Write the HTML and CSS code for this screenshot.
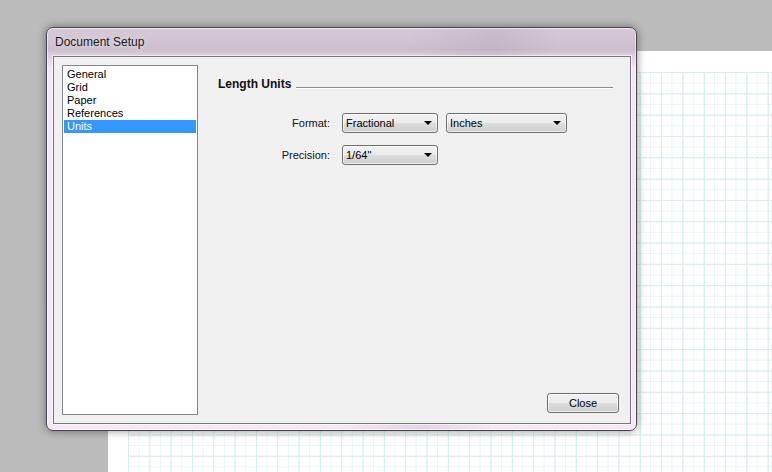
FILE: index.html
```html
<!DOCTYPE html>
<html>
<head>
<meta charset="utf-8">
<link rel="stylesheet" href="styles.css">
</head>
<body>
<div class="desktop">
  <div class="paper"><div class="grid"></div></div>
  <div class="window">
    <div class="titlebar">Document Setup</div>
    <div class="client">
      <ul class="list">
        <li>General</li>
        <li>Grid</li>
        <li>Paper</li>
        <li>References</li>
        <li class="selected">Units</li>
      </ul>
      <div class="panel">
        <div class="group-head"><span class="group-title">Length Units</span><span class="rule"></span></div>
        <div class="form">
          <label class="lbl">Format:</label>
          <div class="fields">
            <div class="combo w96"><span>Fractional</span><i class="arrow"></i></div>
            <div class="combo w121"><span>Inches</span><i class="arrow"></i></div>
          </div>
          <label class="lbl">Precision:</label>
          <div class="fields">
            <div class="combo w96"><span>1/64"</span><i class="arrow"></i></div>
          </div>
        </div>
        <div class="footer"><button class="btn">Close</button></div>
      </div>
    </div>
  </div>
</div>
</body>
</html>
```

FILE: styles.css
```css
html, body {
  margin: 0;
  padding: 0;
}
body {
  width: 772px;
  height: 472px;
  overflow: hidden;
  background: #bbbbbb;
  font-family: "Liberation Sans", Arial, sans-serif;
  font-size: 11px;
  color: #000;
}
.desktop {
  position: relative;
  width: 772px;
  height: 472px;
}
.paper {
  position: absolute;
  left: 108px;
  top: 51px;
  right: 0;
  bottom: 0;
  background: #ffffff;
  padding: 21px 0 0 20px;
  box-sizing: border-box;
}
.grid {
  width: 100%;
  height: 100%;
  background-color: #fff;
  background-image:
    linear-gradient(to right, #d9eced 1px, transparent 1px),
    linear-gradient(to bottom, #d9eced 1px, transparent 1px),
    linear-gradient(to right, #e9f5f5 1px, transparent 1px),
    linear-gradient(to bottom, #e9f5f5 1px, transparent 1px);
  background-size: 21.33px 21.33px, 21.33px 21.33px, 10.667px 10.667px, 10.667px 10.667px;
}
.window {
  position: absolute;
  left: 46px;
  top: 27px;
  width: 591px;
  height: 404px;
  box-sizing: border-box;
  border: 1px solid #4a4550;
  border-radius: 7px;
  padding: 0 5px 6px 6px;
  background:
    linear-gradient(100deg, rgba(255,255,255,0) 55%, rgba(150,130,155,0.18) 68%, rgba(255,255,255,0) 78%),
    linear-gradient(to bottom, #d6c9d8 0px, #cdbfce 22px, #dccfdd 27px, #f3e7f3 40px, #f4e8f4 100%);
  box-shadow: 0 0 9px rgba(0,0,0,0.45), inset 0 0 0 1px rgba(255,255,255,0.55);
  display: flex;
  flex-direction: column;
}
.titlebar {
  height: 28px;
  line-height: 28px;
  padding-left: 2px;
  font-size: 12px;
  color: #1a1a1a;
  text-shadow: 0 0 6px rgba(255,255,255,0.8);
}
.client {
  flex: 1;
  border: 1px solid #7a747c;
  background: #f0f0f0;
  display: flex;
  padding: 8px 0 8px 8px;
  box-shadow: 0 0 0 1px rgba(255,255,255,0.6);
}
.list {
  list-style: none;
  margin: 0;
  padding: 2px 1px;
  width: 136px;
  box-sizing: border-box;
  border: 1px solid #828790;
  background: #ffffff;
}
.list li {
  height: 13px;
  line-height: 13px;
  padding-left: 3px;
}
.list li.selected {
  background: #3399ff;
  color: #ffffff;
}
.panel {
  flex: 1;
  display: flex;
  flex-direction: column;
  padding: 12px 11px 2px 20px;
}
.group-head {
  display: flex;
  height: 14px;
  align-items: flex-end;
}
.group-title {
  font-weight: bold;
  font-size: 12px;
  line-height: 14px;
  align-self: center;
  color: #111;
}
.rule {
  flex: 1;
  height: 1px;
  margin: 0 6px 3px 5px;
  background: #8c8c8c;
  box-shadow: 0 1px 0 #ffffff;
}
.form {
  margin-top: 22px;
  display: grid;
  grid-template-columns: 112px auto;
  column-gap: 12px;
  row-gap: 12px;
  align-items: center;
}
.lbl {
  text-align: right;
  color: #111;
}
.fields {
  display: flex;
  gap: 8px;
}
.combo {
  height: 20px;
  box-sizing: border-box;
  border: 1px solid #707070;
  border-radius: 3px;
  background: linear-gradient(to bottom, #f2f2f2 0%, #ebebeb 50%, #dddddd 51%, #cfcfcf 100%);
  box-shadow: inset 0 0 0 1px rgba(255,255,255,0.6);
  display: flex;
  align-items: center;
  justify-content: space-between;
  padding: 0 5px 0 3px;
}
.w96 { width: 96px; }
.w121 { width: 121px; }
.arrow {
  width: 0;
  height: 0;
  border-left: 4px solid transparent;
  border-right: 4px solid transparent;
  border-top: 4px solid #000;
}
.footer {
  margin-top: auto;
  display: flex;
  justify-content: flex-end;
}
.btn {
  width: 72px;
  height: 20px;
  font-family: "Liberation Sans", Arial, sans-serif;
  font-size: 11px;
  color: #000;
  border: 1px solid #707070;
  border-radius: 3px;
  background: linear-gradient(to bottom, #f2f2f2 0%, #ebebeb 50%, #dddddd 51%, #cfcfcf 100%);
  box-shadow: inset 0 0 0 1px rgba(255,255,255,0.6);
  padding: 0;
}
```
